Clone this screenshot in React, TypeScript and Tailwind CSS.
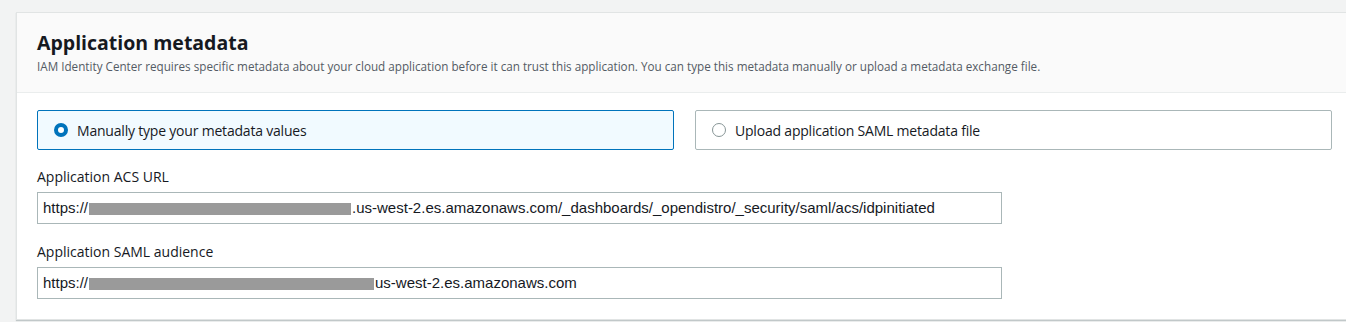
import { useState } from "react";

type Mode = "manual" | "upload";

const ui = { fontFamily: '"Open Sans", "Noto Sans", Arial, sans-serif' };
const mono = { fontFamily: '"Liberation Sans", Arial, Helvetica, sans-serif' };

function Radio({ checked }: { checked: boolean }) {
  return checked ? (
    <span className="inline-block h-[14px] w-[14px] rounded-full border-[4px] border-[#0073bb] bg-white" />
  ) : (
    <span className="inline-block h-[14px] w-[14px] rounded-full border border-[#879596] bg-white" />
  );
}

function Tile({ label, checked, onClick }: { label: string; checked: boolean; onClick: () => void }) {
  return (
    <button
      type="button"
      onClick={onClick}
      className={`flex h-[40px] items-center gap-[9px] rounded-[2px] border px-[16px] text-left text-[14px] text-[#16191f] ${
        checked ? "border-[#0073bb] bg-[#f1faff]" : "border-[#aab7b8] bg-white"
      }`}
      style={ui}
    >
      <Radio checked={checked} />
      <span className="tracking-[-0.2px]">{label}</span>
    </button>
  );
}

// blacked-out part of the hostname
function Redacted({ width }: { width: number }) {
  return <span className="mx-[1px] inline-block h-[12px] translate-y-[1px] bg-[#9a9a9a]" style={{ width }} />;
}

function Field({ label, rest, hide }: { label: string; rest: string; hide: number }) {
  return (
    <div className="flex flex-col">
      <label className="mb-[5px] text-[14px] leading-[20px] text-[#16191f]" style={ui}>
        {label}
      </label>
      <div
        className="flex h-[32px] w-[965px] items-center border border-[#aab7b8] bg-white px-[5px] text-[15px] text-[#16191f]"
        style={mono}
      >
        <span>https://</span>
        <Redacted width={hide} />
        <span>{rest}</span>
      </div>
    </div>
  );
}

export default function App() {
  const [mode, setMode] = useState<Mode>("manual");

  return (
    <div className="h-[322px] w-[1346px] overflow-hidden bg-[#f2f3f3] pl-[16px] pt-[12px]">
      <div className="w-[1360px] border-b border-l border-t border-[#e1e4e4] bg-white shadow-[0_1px_1px_rgba(0,28,36,0.2)]">
        {/* header */}
        <div className="border-b border-[#eaeded] bg-[#fafafa] px-[20px] pb-[18px] pt-[19px]" style={ui}>
          <h2 className="text-[19.5px] font-bold leading-[22px] text-[#16191f]">Application metadata</h2>
          <p className="mt-[4px] text-[11.7px] leading-[16px] text-[#545b64]">
            IAM Identity Center requires specific metadata about your cloud application before it can trust this
            application. You can type this metadata manually or upload a metadata exchange file.
          </p>
        </div>

        {/* body */}
        <div className="px-[20px] pb-[20px] pt-[17px]">
          <div className="grid w-[1295px] grid-cols-2 gap-[21px]">
            <Tile label="Manually type your metadata values" checked={mode === "manual"} onClick={() => setMode("manual")} />
            <Tile label="Upload application SAML metadata file" checked={mode === "upload"} onClick={() => setMode("upload")} />
          </div>

          <div className="mt-[17px] flex flex-col gap-[18px]">
            <Field
              label="Application ACS URL"
              hide={262}
              rest=".us-west-2.es.amazonaws.com/_dashboards/_opendistro/_security/saml/acs/idpinitiated"
            />
            <Field label="Application SAML audience" hide={285} rest="us-west-2.es.amazonaws.com" />
          </div>
        </div>
      </div>
    </div>
  );
}
